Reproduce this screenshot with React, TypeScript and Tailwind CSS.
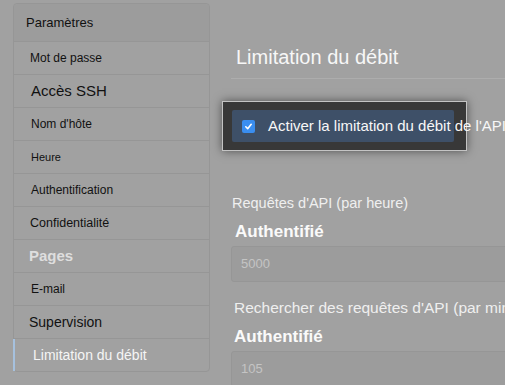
import React from "react";

const rowBase = "flex items-center h-[33px] border-b border-[#969696] whitespace-nowrap";

export default function App() {
  return (
    <div
      className="w-[505px] h-[385px] bg-[#a1a1a1] overflow-hidden flex items-start text-[#111]"
      style={{ fontFamily: '"Liberation Sans", Arial, sans-serif' }}
    >
      {/* Sidebar */}
      <div className="ml-[13px] mt-[3px] w-[197px] shrink-0 border border-[#969696] rounded-[4px] flex flex-col">
        <div className="flex items-center h-[38px] border-b border-[#969696] bg-[#9c9c9c] rounded-t-[4px] pl-[12px] text-[13px]">
          Paramètres
        </div>
        <div className={`${rowBase} pl-[16px] text-[12px]`}>Mot de passe</div>
        <div className={`${rowBase} pl-[17px] text-[15px]`}>Accès SSH</div>
        <div className={`${rowBase} pl-[17px] text-[12px]`}>Nom d'hôte</div>
        <div className={`${rowBase} pl-[17px] text-[11px]`}>Heure</div>
        <div className={`${rowBase} pl-[17px] text-[12px]`}>Authentification</div>
        <div className={`${rowBase} pl-[16px] text-[12.5px]`}>Confidentialité</div>
        <div className={`${rowBase} pl-[15px] text-[15px] font-bold text-[#dedede]`}>Pages</div>
        <div className={`${rowBase} pl-[17px] text-[12px]`}>E-mail</div>
        <div className={`${rowBase} pl-[15px] text-[14px]`}>Supervision</div>
        <div className="flex items-center h-[32px] -ml-px border-l-2 border-[#a6c1de] pl-[18px] text-[14px] text-[#f5f5f5] whitespace-nowrap">
          Limitation du débit
        </div>
      </div>

      {/* Content */}
      <div className="flex-1 min-w-0 pl-[21px] flex flex-col">
        <div className="pt-[45px] pb-[9px] border-b border-[#adadad] w-[400px]">
          <div className="pl-[5px] text-[20px] leading-[24px] text-[#f7f7f7] whitespace-nowrap">
            Limitation du débit
          </div>
        </div>

        <div className="mt-[22px] -ml-[9px] w-[245px] h-[50px] border border-[#c4c4c4] bg-[#383838] pt-[8px] pl-[9px] shadow-[0_0_9px_rgba(0,0,0,0.5)]">
          <div className="w-[222px] h-[32px] rounded-[2px] bg-[#3e5068] flex items-center pl-[10px]">
            <div className="w-[13px] h-[13px] shrink-0 rounded-[2px] bg-[#3a8ef0] flex items-center justify-center">
              <svg width="9" height="9" viewBox="0 0 10 10">
                <path d="M2 5.3 L4.1 7.4 L8 2.6" fill="none" stroke="#fff" strokeWidth="1.8" strokeLinecap="round" strokeLinejoin="round" />
              </svg>
            </div>
            <span className="ml-[13px] text-[15px] text-[#f7f7f7] whitespace-nowrap">
              Activer la limitation du débit de l'API
            </span>
          </div>
        </div>

        <div className="mt-[42px] ml-[1px] text-[14.5px] leading-[20px] text-[#efefef] whitespace-nowrap">
          Requêtes d'API (par heure)
        </div>
        <div className="mt-[7px] ml-[4px] text-[17px] leading-[24px] font-bold text-[#fafafa] whitespace-nowrap">
          Authentifié
        </div>
        <div className="mt-[2px] w-[400px] h-[36px] rounded-[3px] border border-[#969696] bg-[#9c9c9c] flex items-center pl-[9px] text-[13px] text-[#c4c4c4]">
          5000
        </div>

        <div className="mt-[16px] ml-[3px] text-[15.5px] leading-[20px] text-[#efefef] whitespace-nowrap">
          Rechercher des requêtes d'API (par minute)
        </div>
        <div className="mt-[7px] ml-[3px] text-[17px] leading-[24px] font-bold text-[#fafafa] whitespace-nowrap">
          Authentifié
        </div>
        <div className="mt-[2px] w-[400px] h-[36px] shrink-0 rounded-[3px] border border-[#969696] bg-[#9c9c9c] flex items-center pl-[9px] text-[13px] text-[#c4c4c4]">
          105
        </div>
      </div>
    </div>
  );
}
